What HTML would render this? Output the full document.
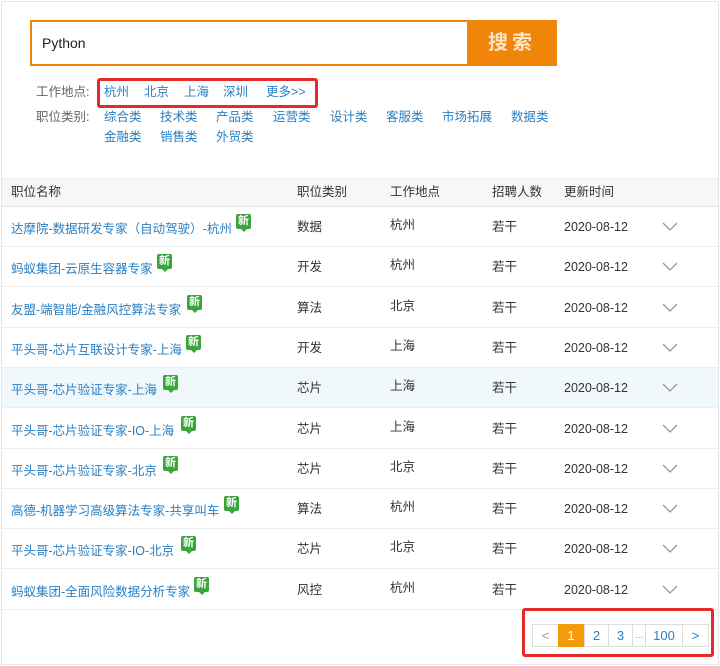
<!DOCTYPE html>
<html><head><meta charset="utf-8"><style>
*{margin:0;padding:0;box-sizing:border-box}
body{width:720px;height:666px;background:#fff;font-family:"Liberation Sans","Noto Sans CJK SC",sans-serif;font-size:12.5px;color:#333;position:relative;overflow:hidden}
.frame{position:absolute;left:1px;top:1px;width:718px;height:664px;border:1px solid #e6e6e6}
.abs{position:absolute;white-space:nowrap;line-height:16px}
.search{left:30px;top:20px;width:438px;height:46px;border:2px solid #f0850a;border-right:none;font-size:14px;padding:13px 0 0 10px;color:#222}
.btn{left:467px;top:20px;width:90px;height:46px;background:#f0850a;color:#fde6c8;font-size:20px;text-align:center;line-height:46px!important;letter-spacing:4px;font-weight:bold}
.lbl{color:#666}
a{color:#2a7fc2;text-decoration:none}
.red{border:3px solid #e52a2a;border-radius:3px}
.hdr{left:2px;top:178px;width:716px;height:29px;background:#f7f7f7;border-bottom:1px solid #e5e5e5;border-top:1px solid #eee}
.row{position:absolute;left:2px;width:716px;height:40px;border-bottom:1px solid #eee}
.new{position:absolute;width:15px;height:15px;background:#3aa53a;color:#fff;font-size:11px;line-height:15px;text-align:center;border-radius:2px;font-weight:bold}
.new:after{content:"";position:absolute;left:5px;bottom:-3px;border:3px solid transparent;border-top-color:#3aa53a;border-bottom:0}
.pg{position:absolute;top:624px;height:23px;border:1px solid #ddd;color:#2a7fc2;text-align:center;line-height:21px;font-size:13px;background:#fff}
</style></head><body>
<div class="frame"></div>
<div class="abs search">Python</div>
<div class="abs btn">搜索</div>
<div class="abs lbl" style="left:36px;top:84px">工作地点:</div>
<div class="abs red" style="left:97px;top:78px;width:221px;height:30px"></div>
<a class="abs" style="left:104px;top:84px">杭州</a><a class="abs" style="left:144px;top:84px">北京</a><a class="abs" style="left:184px;top:84px">上海</a><a class="abs" style="left:223px;top:84px">深圳</a><a class="abs" style="left:266px;top:84px">更多&gt;&gt;</a>
<div class="abs lbl" style="left:36px;top:109px">职位类别:</div>
<a class="abs" style="left:104px;top:109px">综合类</a><a class="abs" style="left:160px;top:109px">技术类</a><a class="abs" style="left:216px;top:109px">产品类</a><a class="abs" style="left:273px;top:109px">运营类</a><a class="abs" style="left:330px;top:109px">设计类</a><a class="abs" style="left:386px;top:109px">客服类</a><a class="abs" style="left:442px;top:109px">市场拓展</a><a class="abs" style="left:511px;top:109px">数据类</a>
<a class="abs" style="left:104px;top:129px">金融类</a><a class="abs" style="left:160px;top:129px">销售类</a><a class="abs" style="left:216px;top:129px">外贸类</a>
<div class="abs hdr"></div>
<div class="abs" style="left:11px;top:184px">职位名称</div>
<div class="abs" style="left:297px;top:184px">职位类别</div>
<div class="abs" style="left:390px;top:184px">工作地点</div>
<div class="abs" style="left:492px;top:184px">招聘人数</div>
<div class="abs" style="left:564px;top:184px">更新时间</div>

<div id="rows"></div>
<script>
var d=[["达摩院-数据研发专家（自动驾驶）-杭州","数据","杭州",236],["蚂蚁集团-云原生容器专家","开发","杭州",157],["友盟-端智能/金融风控算法专家","算法","北京",187],["平头哥-芯片互联设计专家-上海","开发","上海",186],["平头哥-芯片验证专家-上海","芯片","上海",163],["平头哥-芯片验证专家-IO-上海","芯片","上海",181],["平头哥-芯片验证专家-北京","芯片","北京",163],["高德-机器学习高级算法专家-共享叫车","算法","杭州",224],["平头哥-芯片验证专家-IO-北京","芯片","北京",181],["蚂蚁集团-全面风险数据分析专家","风控","杭州",194]];
var h="";
for(var i=0;i<10;i++){var t=207+i*40.3;
h+='<div class="row" style="top:'+t+'px;'+(i==4?'background:#f0f8fc;':'')+'"></div>';
h+='<a class="abs" style="left:11px;top:'+(t+14)+'px">'+d[i][0]+'</a>';
h+='<div class="new" style="left:'+d[i][3]+'px;top:'+(t+7)+'px">新</div>';
h+='<div class="abs" style="left:297px;top:'+(t+12)+'px">'+d[i][1]+'</div>';
h+='<div class="abs" style="left:390px;top:'+(t+10)+'px">'+d[i][2]+'</div>';
h+='<div class="abs" style="left:492px;top:'+(t+12)+'px">若干</div>';
h+='<div class="abs" style="left:564px;top:'+(t+12)+'px">2020-08-12</div>';
h+='<svg class="abs" style="left:662px;top:'+(t+15)+'px" width="16" height="10"><path d="M1 1 L8 8 L15 1" fill="none" stroke="#999" stroke-width="1.3"/></svg>';}
document.getElementById("rows").innerHTML=h;
</script>
<div class="abs red" style="left:522px;top:608px;width:192px;height:49px"></div>
<div class="pg" style="left:532px;width:27px;color:#999">&lt;</div>
<div class="pg" style="left:558px;width:26px;background:#f49b0c;border-color:#f49b0c;color:#fff">1</div>
<div class="pg" style="left:584px;width:25px">2</div>
<div class="pg" style="left:608px;width:25px">3</div>
<div class="pg" style="left:632px;width:14px;color:#999;font-size:10px">...</div>
<div class="pg" style="left:645px;width:38px">100</div>
<div class="pg" style="left:682px;width:27px">&gt;</div>
</body></html>
